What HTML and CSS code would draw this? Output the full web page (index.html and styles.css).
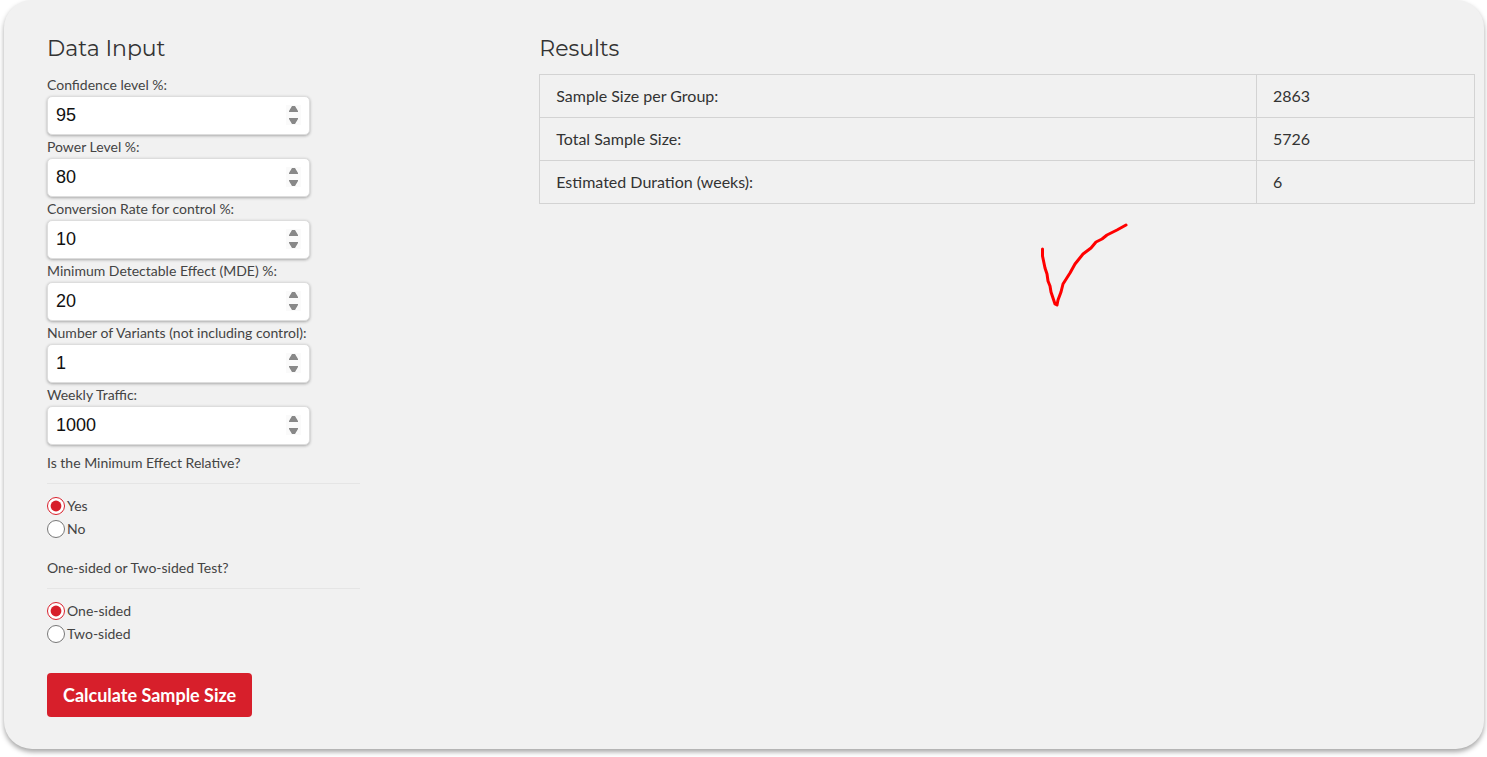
FILE: index.html
```html
<!DOCTYPE html>
<html lang="en">
<head>
    <meta charset="UTF-8">
    <meta name="viewport" content="width=device-width, initial-scale=1.0">
    <title>Sample Size Calculator</title>
    <link rel="stylesheet" href="styles.css">
</head>
<body>
    <div class="calculator">
        <form class="data-input" onsubmit="return false">
            <h2>Data Input</h2>
            <div class="field">
                <label for="confidence">Confidence level %:</label>
                <input type="number" id="confidence" value="95">
            </div>
            <div class="field">
                <label for="power">Power Level %:</label>
                <input type="number" id="power" value="80">
            </div>
            <div class="field">
                <label for="conversion">Conversion Rate for control %:</label>
                <input type="number" id="conversion" value="10">
            </div>
            <div class="field">
                <label for="mde">Minimum Detectable Effect (MDE) %:</label>
                <input type="number" id="mde" value="20">
            </div>
            <div class="field">
                <label for="variants">Number of Variants (not including control):</label>
                <input type="number" id="variants" value="1">
            </div>
            <div class="field">
                <label for="traffic">Weekly Traffic:</label>
                <input type="number" id="traffic" value="1000">
            </div>
            <fieldset>
                <legend>Is the Minimum Effect Relative?</legend>
                <label class="option"><input type="radio" name="relative" value="yes" checked>Yes</label>
                <label class="option"><input type="radio" name="relative" value="no">No</label>
            </fieldset>
            <fieldset>
                <legend>One-sided or Two-sided Test?</legend>
                <label class="option"><input type="radio" name="sided" value="one" checked>One-sided</label>
                <label class="option"><input type="radio" name="sided" value="two">Two-sided</label>
            </fieldset>
            <button type="submit">Calculate Sample Size</button>
        </form>
        <section class="results">
            <h2>Results</h2>
            <table>
                <tbody>
                    <tr>
                        <th scope="row">Sample Size per Group:</th>
                        <td>2863</td>
                    </tr>
                    <tr>
                        <th scope="row">Total Sample Size:</th>
                        <td>5726</td>
                    </tr>
                    <tr>
                        <th scope="row">Estimated Duration (weeks):</th>
                        <td>6</td>
                    </tr>
                </tbody>
            </table>
            <svg class="checkmark" width="90" height="86" viewBox="0 0 90 86" aria-hidden="true">
                <path d="M3.500 27 L3.500 34 L6 46 L8 52 L9 59 L11 64 L12 70 L14 76 L16 82 L18 83 L19 78 L22 70 L24 62 L31 51 L36 42 L44 32 L52 26 L57 20 L63 17 L68 13 L78 8 L87 3"/>
            </svg>
        </section>
    </div>
</body>
</html>
```
FILE: styles.css
```css
* {
    box-sizing: border-box;
}
body {
    margin: 0;
    padding: 0 3px 8px 4px;
    background: #fff;
    color: #333;
    font-family: Lato, sans-serif;
    font-size: 16px;
}
.calculator {
    display: flex;
    gap: 21px;
    padding: 33px 9px 32px 43px;
    background: #f1f1f1;
    border-radius: 28px;
    box-shadow: 0 3px 5px rgba(0, 0, 0, 0.35);
}
.data-input {
    width: 33%;
}
.results {
    flex: 1;
}
h2 {
    margin: 0 0 9px;
    font-family: Montserrat, "DejaVu Sans", sans-serif;
    font-size: 22px;
    font-weight: 400;
    line-height: 32px;
}
.field label {
    display: block;
    color: #444;
    font-size: 14px;
    line-height: 22px;
}
.field input {
    display: block;
    width: 263px;
    height: 39px;
    margin: 0 0 1px;
    padding: 0 8px;
    border: 1px solid #ddd;
    border-radius: 5px;
    background: #fff;
    color: #111;
    box-shadow: 0 1px 3px rgba(0, 0, 0, 0.3);
    font-family: "Liberation Sans", Arial, sans-serif;
    font-size: 18px;
}
.field input::-webkit-inner-spin-button {
    -webkit-appearance: none;
    width: 15px;
    height: 20px;
    background: #fafafa url("data:image/svg+xml,%3Csvg xmlns='http://www.w3.org/2000/svg' width='15' height='20'%3E%3Cpath fill='%23888' d='M3 7V6L6 1H9L12 6V7ZM3 13V14L6 19H9L12 14V13Z'/%3E%3C/svg%3E") no-repeat center;
    opacity: 1;
}
fieldset {
    width: 313px;
    margin: 0 0 11px;
    padding: 0;
    border: none;
}
legend {
    width: 100%;
    margin-bottom: 10px;
    padding: 6px 0 9px;
    border-bottom: 1px solid #e5e5e5;
    color: #444;
    font-size: 14px;
    line-height: 22px;
}
.option {
    display: flex;
    align-items: center;
    gap: 2px;
    color: #444;
    font-size: 14px;
    line-height: 23px;
}
.option input {
    width: 18px;
    height: 18px;
    margin: 0;
    accent-color: #d71f2b;
}
button {
    height: 44px;
    margin-top: 17px;
    padding: 0 16px;
    border: none;
    border-radius: 4px;
    background: #d71f2b;
    color: #fff;
    font-family: Lato, sans-serif;
    font-size: 18px;
    font-weight: 700;
    cursor: pointer;
}
table {
    width: 100%;
    border-collapse: collapse;
}
th, td {
    padding: 9px 16px;
    border: 1px solid #d3d3d3;
    font-weight: 400;
    line-height: 24px;
    text-align: left;
}
td {
    width: 218px;
}
.checkmark {
    display: block;
    margin: 18px 37% 0 auto;
}
.checkmark path {
    fill: none;
    stroke: #f00;
    stroke-width: 3;
    stroke-linecap: round;
    stroke-linejoin: round;
}
```
